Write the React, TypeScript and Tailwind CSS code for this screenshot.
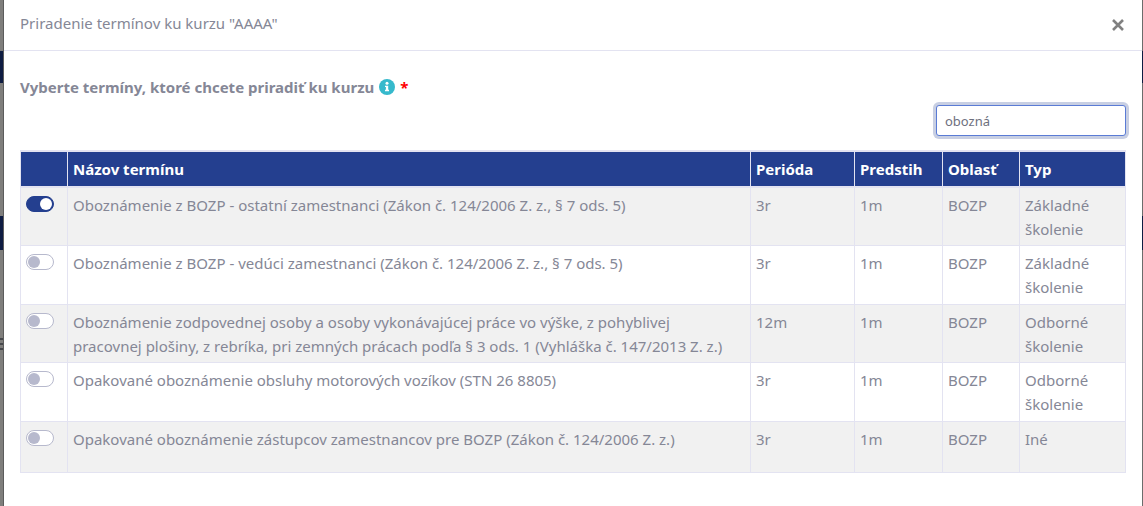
import { useState } from "react";

type Term = {
  id: number;
  name: string;
  period: string;
  advance: string;
  area: string;
  type: string;
};

const TERMS: Term[] = [
  {
    id: 1,
    name: "Oboznámenie z BOZP - ostatní zamestnanci (Zákon č. 124/2006 Z. z., § 7 ods. 5)",
    period: "3r",
    advance: "1m",
    area: "BOZP",
    type: "Základné školenie",
  },
  {
    id: 2,
    name: "Oboznámenie z BOZP - vedúci zamestnanci (Zákon č. 124/2006 Z. z., § 7 ods. 5)",
    period: "3r",
    advance: "1m",
    area: "BOZP",
    type: "Základné školenie",
  },
  {
    id: 3,
    name: "Oboznámenie zodpovednej osoby a osoby vykonávajúcej práce vo výške, z pohyblivej pracovnej plošiny, z rebríka, pri zemných prácach podľa § 3 ods. 1 (Vyhláška č. 147/2013 Z. z.)",
    period: "12m",
    advance: "1m",
    area: "BOZP",
    type: "Odborné školenie",
  },
  {
    id: 4,
    name: "Opakované oboznámenie obsluhy motorových vozíkov (STN 26 8805)",
    period: "3r",
    advance: "1m",
    area: "BOZP",
    type: "Odborné školenie",
  },
  {
    id: 5,
    name: "Opakované oboznámenie zástupcov zamestnancov pre BOZP (Zákon č. 124/2006 Z. z.)",
    period: "3r",
    advance: "1m",
    area: "BOZP",
    type: "Iné",
  },
];

const HEAD_CELL = "border-x border-y-2 border-[#e3e3f1] px-[5px] py-[5px] font-bold";
const CELL = "border border-[#e3e3f1] pl-[5px] pt-[5px] pb-1 group-even:pb-[5px]";

function Switch({ label, checked, onChange }: { label: string; checked: boolean; onChange: () => void }) {
  return (
    <input
      type="checkbox"
      role="switch"
      aria-label={label}
      checked={checked}
      onChange={onChange}
      className="mt-[3px] flex h-4 w-7 cursor-pointer appearance-none items-center rounded-full border border-[#b7b9cd] bg-white px-px before:size-3 before:rounded-full before:bg-[#b7b9cd] checked:justify-end checked:border-[#243f8f] checked:bg-[#243f8f] checked:before:bg-white"
    />
  );
}

// Slice of the dimmed page that stays visible beside the dialog
function Backdrop({ className, side }: { className: string; side: "left" | "right" }) {
  return (
    <div aria-hidden="true" className={`flex shrink-0 flex-col ${className}`}>
      <div className="h-[51px]" />
      <div className="h-8 bg-[#0e1c42]" />
      <div className="h-[133px]" />
      <div className="h-[34px] bg-[#0e1c42]" />
      <div className="h-[88px]" />
      {side === "left" ? (
        <div className="flex h-3 flex-col justify-between">
          <div className="h-[2px] bg-[#46484c]" />
          <div className="h-[2px] bg-[#46484c]" />
          <div className="h-[2px] bg-[#46484c]" />
        </div>
      ) : null}
    </div>
  );
}

export default function App() {
  const [query, setQuery] = useState("obozná");
  const [selected, setSelected] = useState<number[]>([1]);

  const toggle = (id: number) =>
    setSelected((prev) => (prev.includes(id) ? prev.filter((x) => x !== id) : [...prev, id]));

  const rows = TERMS.filter((t) => t.name.toLowerCase().includes(query.toLowerCase()));

  return (
    <div className="flex min-h-screen font-['Noto_Sans','Open_Sans',sans-serif] text-[15px] leading-6 text-[#858796]">
      <Backdrop side="left" className="w-1 border-r border-[#5c5c5c] bg-[#7f7e7c]" />
      <div role="dialog" aria-labelledby="dialog-title" className="min-w-0 flex-1 bg-white">
        <header className="flex h-[51px] items-center justify-between border-b border-[#e3e3f1] px-4">
          <h1 id="dialog-title" className="pb-1">
            Priradenie termínov ku kurzu "AAAA"
          </h1>
          <button type="button" aria-label="Zavrieť" className="mr-0.5 text-[#808080]">
            <svg viewBox="0 0 12 12" className="size-3" stroke="currentColor" strokeWidth="2.6" fill="none">
              <path d="M1 1l10 10M11 1L1 11" />
            </svg>
          </button>
        </header>

        <main className="px-4 pt-6">
          <div className="flex items-center gap-[5px]">
            <label htmlFor="term-search" className="font-bold">
              Vyberte termíny, ktoré chcete priradiť ku kurzu
            </label>
            <svg viewBox="0 0 16 16" className="size-4" aria-hidden="true">
              <circle cx="8" cy="8" r="8" fill="#36b9cc" />
              <circle cx="8" cy="4.3" r="1.5" fill="#fff" />
              <path d="M6 6.7h3.2v4.1H10v1.4H6v-1.4h.9V8.1H6z" fill="#fff" />
            </svg>
            <span className="font-bold text-[#ff0000]">*</span>
          </div>

          <div className="mt-[6px] flex justify-end">
            <input
              id="term-search"
              type="text"
              value={query}
              onChange={(e) => setQuery(e.target.value)}
              className="h-[31px] w-[190px] rounded-[3px] border border-[#5a7bd5] bg-white px-2 text-[13px] text-[#6e707e] shadow-[0_0_0_3px_#c8cfe3] outline-none"
            />
          </div>

          <table className="mt-[14px] w-full table-fixed border-collapse">
            <colgroup>
              <col className="w-[47px]" />
              <col />
              <col className="w-[104px]" />
              <col className="w-[88px]" />
              <col className="w-[77px]" />
              <col className="w-[106px]" />
            </colgroup>
            <thead>
              <tr className="bg-[#243f8f] text-left text-white">
                <th className={HEAD_CELL} aria-label="Výber" />
                <th className={HEAD_CELL}>Názov termínu</th>
                <th className={HEAD_CELL}>Perióda</th>
                <th className={HEAD_CELL}>Predstih</th>
                <th className={HEAD_CELL}>Oblasť</th>
                <th className={HEAD_CELL}>Typ</th>
              </tr>
            </thead>
            <tbody>
              {rows.map((term) => (
                <tr key={term.id} className="group h-[51px] align-top odd:bg-[#f1f1f1]">
                  <td className={CELL}>
                    <Switch
                      label={term.name}
                      checked={selected.includes(term.id)}
                      onChange={() => toggle(term.id)}
                    />
                  </td>
                  <td className={`${CELL} pr-5`}>{term.name}</td>
                  <td className={CELL}>{term.period}</td>
                  <td className={CELL}>{term.advance}</td>
                  <td className={CELL}>{term.area}</td>
                  <td className={CELL}>{term.type}</td>
                </tr>
              ))}
            </tbody>
          </table>
        </main>
      </div>
      <Backdrop side="right" className="w-px bg-[#6b6c6c]" />
    </div>
  );
}
